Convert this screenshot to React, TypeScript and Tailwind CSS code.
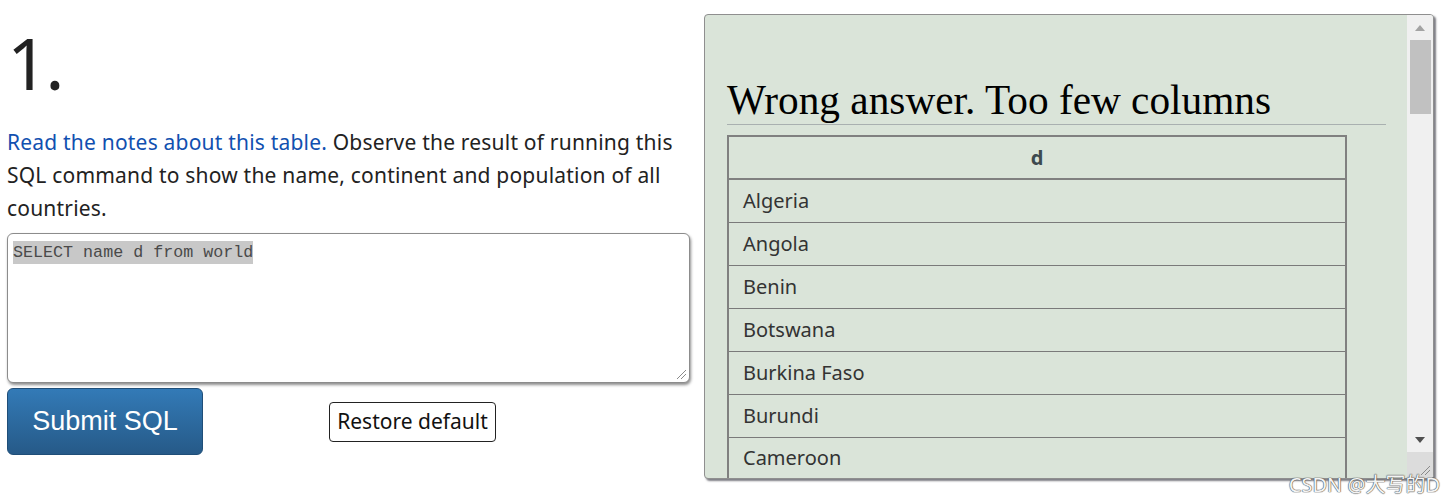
import React from "react";

const countries = [
  "Algeria",
  "Angola",
  "Benin",
  "Botswana",
  "Burkina Faso",
  "Burundi",
  "Cameroon",
];

function ResizeGrip({ className }: { className?: string }) {
  return (
    <svg width="12" height="12" viewBox="0 0 12 12" className={className}>
      <line x1="11" y1="2" x2="2" y2="11" stroke="#8a8a8a" strokeWidth="1" />
      <line x1="11" y1="6" x2="6" y2="11" stroke="#8a8a8a" strokeWidth="1" />
    </svg>
  );
}

function Scrollbar() {
  return (
    <div className="w-[26px] h-full bg-[#f0f0f0] flex flex-col items-center shrink-0">
      {/* up arrow */}
      <div className="h-[25px] w-full flex items-center justify-center">
        <svg width="10" height="6" viewBox="0 0 10 6">
          <polygon points="5,0 10,6 0,6" fill="#a3a3a3" />
        </svg>
      </div>
      {/* thumb */}
      <div className="w-[21px] h-[74px] bg-[#c1c1c1]" />
      <div className="flex-1" />
      {/* down arrow */}
      <div className="h-[25px] w-full flex items-center justify-center">
        <svg width="10" height="6" viewBox="0 0 10 6">
          <polygon points="0,0 10,0 5,6" fill="#505050" />
        </svg>
      </div>
      {/* resize corner */}
      <div className="h-[26px] w-full bg-[#dcdcdc] flex items-end justify-end p-[2px]">
        <ResizeGrip />
      </div>
    </div>
  );
}

export default function App() {
  return (
    <div className="relative h-[503px] w-[1455px] bg-white flex items-start overflow-hidden font-['Noto_Sans',sans-serif]">
      {/* Left: question */}
      <div className="w-[697px] shrink-0 pl-[7px]">
        <h1 className="mt-[26px] text-[72px] leading-[72px] font-normal text-[#222] tracking-[-3px]">
          1.
        </h1>

        <p className="mt-[28px] w-[683px] text-[21px] leading-[33px] tracking-[0.2px] text-[#222]">
          <a className="text-[#1150b0]">Read the notes about this table.</a>{" "}
          Observe the result of running this SQL command to show the name,
          continent and population of all countries.
        </p>

        <div className="relative mt-[8px] w-[683px] h-[150px] border border-[#8c8c8c] rounded-[6px] bg-white shadow-[1px_2px_3px_rgba(0,0,0,0.45)] pl-[5px] pt-[5px]">
          <span className="bg-[#c8c8c8] text-[#4a4a4a] font-['Liberation_Mono',monospace] text-[16.7px] leading-[23px] inline-block">
            SELECT name d from world
          </span>
          <ResizeGrip className="absolute right-[2px] bottom-[2px]" />
        </div>

        <div className="mt-[5px] flex items-center">
          <button className="w-[196px] h-[67px] rounded-[6px] border border-[#1f4e78] bg-gradient-to-b from-[#337ab7] to-[#265a88] text-white text-[27px] font-['Liberation_Sans',sans-serif]">
            Submit SQL
          </button>
          <button className="ml-[126px] h-[40px] w-[167px] rounded-[4px] border border-[#222] bg-white text-[21px] text-[#111] leading-none">
            Restore default
          </button>
        </div>
      </div>

      {/* Right: result panel */}
      <div className="mt-[14px] ml-[7px] w-[730px] h-[465px] border border-[#8f8f8f] rounded-[4px] bg-[#dae4d9] shadow-[2px_2px_2px_rgba(70,70,80,0.7)] flex overflow-hidden">
        <div className="flex-1 h-full overflow-hidden pl-[22px] pr-[21px]">
          <h2 className="mt-[61px] h-[49px] border-b border-[#a9b0b0] font-['Liberation_Serif',serif] text-[41.3px] leading-[48px] text-black whitespace-nowrap">
            Wrong answer. Too few columns
          </h2>
          <table className="mt-[10px] w-[620px] border-collapse border-2 border-[#808080] text-[20px]">
            <thead>
              <tr className="h-[43px] border-b-2 border-[#808080]">
                <th className="font-bold text-[#3d4a4e] text-center">d</th>
              </tr>
            </thead>
            <tbody>
              {countries.map((c) => (
                <tr key={c} className="h-[43px] border-b border-[#7a7a7a]">
                  <td className="pl-[14px] text-[#333]">{c}</td>
                </tr>
              ))}
            </tbody>
          </table>
        </div>
        <Scrollbar />
      </div>

      {/* Watermark */}
      <div className="absolute right-[15px] bottom-[8px] text-[20px] leading-none text-[#f4f4f4] font-['Noto_Sans','Noto_Sans_CJK_SC',sans-serif] [text-shadow:0_0_1px_#555,0_0_1px_#555,0_0_1px_#555]">
        CSDN @大写的D
      </div>
    </div>
  );
}
